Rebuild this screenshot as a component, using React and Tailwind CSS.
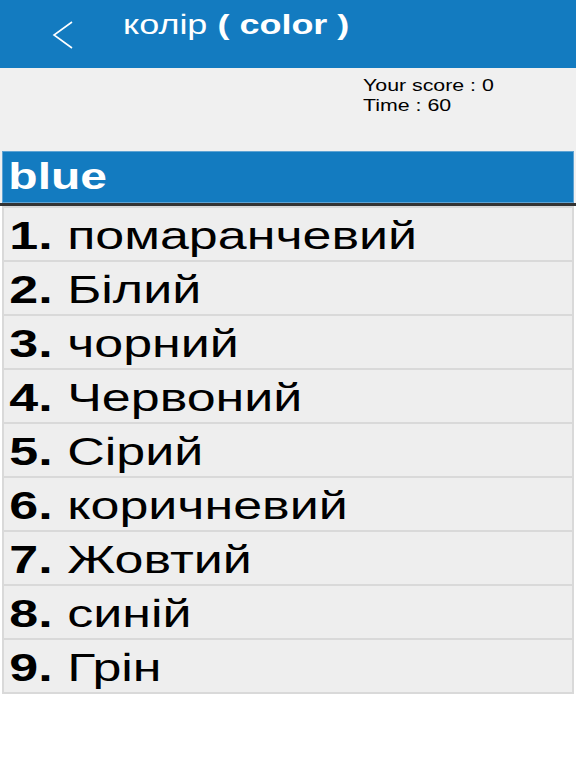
import React from 'react';

const answers = [
  'помаранчевий',
  'Білий',
  'чорний',
  'Червоний',
  'Сірий',
  'коричневий',
  'Жовтий',
  'синій',
  'Грін',
];

const font = { fontFamily: '"Liberation Sans", Arial, sans-serif' };

const App = () => {
  return (
    <div className="w-[576px] h-[768px] bg-white overflow-hidden" style={font}>
      {/* top bar */}
      <div className="h-[68px] bg-[#137bc0] flex items-start relative">
        <svg className="absolute left-[50px] top-[20px]" width="26" height="30" viewBox="0 0 26 30">
          <polyline points="22,2 4,15 22,28" fill="none" stroke="white" strokeWidth="1.6" />
        </svg>
        <div className="ml-[123px] mt-[8px] text-[27px] text-white leading-[34px] origin-left scale-x-[1.333] whitespace-nowrap">
          колір <span className="font-bold">( color )</span>
        </div>
      </div>

      {/* score area */}
      <div className="h-[83px] bg-[#f0f0f0] flex justify-start">
        <div className="ml-[363px] mt-[8px] text-[16px] leading-[20px] text-black origin-left scale-x-[1.333] whitespace-nowrap">
          <div>Your score : 0</div>
          <div>Time : 60</div>
        </div>
      </div>

      {/* word to guess */}
      <div className="bg-[#f0f0f0] px-[2px]">
        <div className="h-[52px] bg-[#137bc0] border border-[#5fa3d3] flex items-center">
          <span className="pl-[4px] text-[36px] font-bold text-white leading-none origin-left scale-x-[1.333]">
            blue
          </span>
        </div>
      </div>
      <div className="h-[3px] bg-[#333333]" />

      {/* answers */}
      <div className="px-[2px]">
        {answers.map((a, i) => (
          <div
            key={a}
            className="h-[56px] bg-[#eeeeee] border-2 border-[#d9d9d9] -mt-[2px] first:mt-0 flex items-center"
          >
            <span className="pl-[4px] pt-[2px] text-[39px] leading-none text-black origin-left scale-x-[1.333] whitespace-nowrap">
              <span className="font-bold">{i + 1}. </span>
              {a}
            </span>
          </div>
        ))}
      </div>
    </div>
  );
};

export default App;
